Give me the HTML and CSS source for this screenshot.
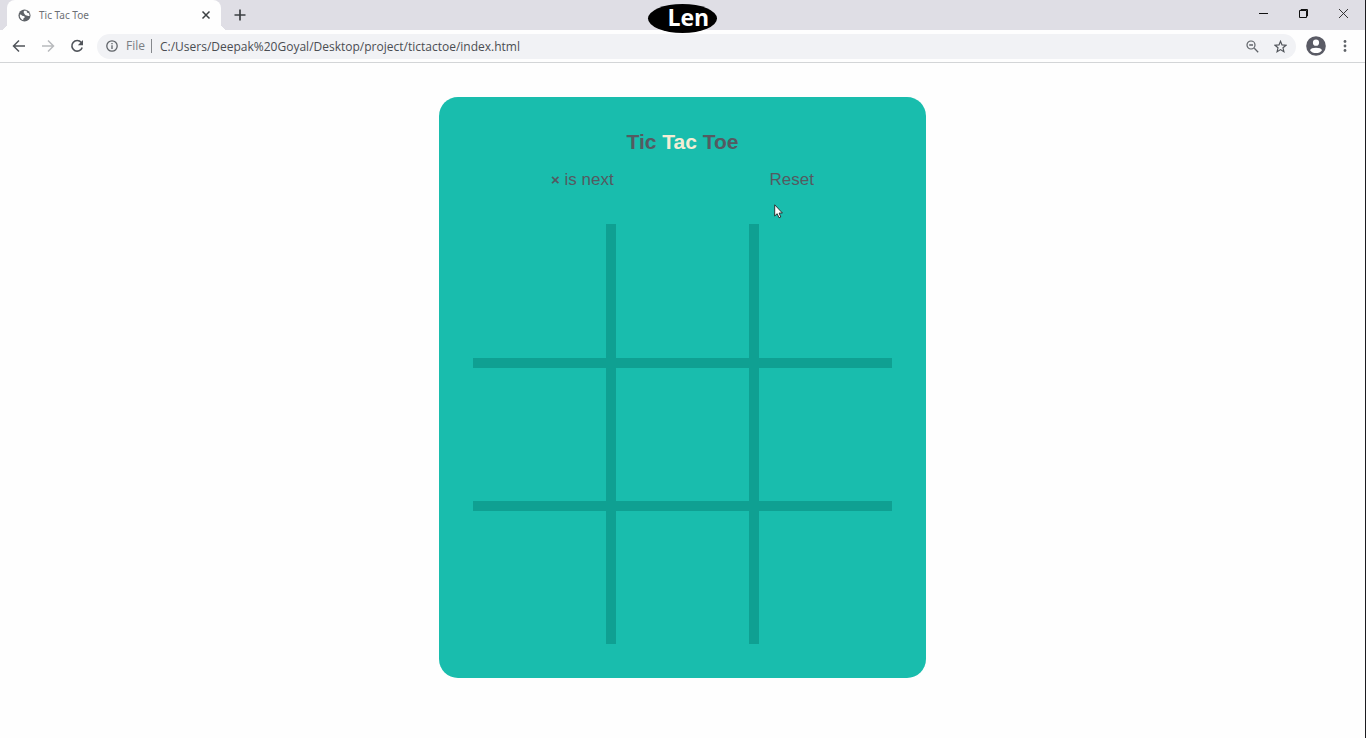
FILE: index.html
```html
<!DOCTYPE html>
<html lang="en">
<head>
<meta charset="utf-8">
<title>Tic Tac Toe</title>
<link rel="stylesheet" href="styles.css">
</head>
<body>
<div class="window">
  <header class="browser">
    <div class="tab-strip">
      <div class="tab">
        <svg class="favicon" viewBox="0 0 14 14"><circle cx="7" cy="7" r="6.500" fill="#5f6368"/><path d="M2 6 C4 5.500 4 8 6 7.500 C8 8 7.500 9.500 6 10 L5.500 12 C3 11 1.500 9 2 6Z M6.500 2 L9.500 2 C9 4 10 4.500 12 4.500 L12.500 7.500 C11 8 10 7 9 7 C8 6.500 7 6 7 5 C6 5 6 3 6.500 2Z" fill="#fff"/></svg>
        <span class="tab-title">Tic Tac Toe</span>
        <button class="icon-button" aria-label="Close tab"><svg width="10" height="10" viewBox="0 0 10 10"><path d="M1.500 1.500 8.500 8.500M8.500 1.500 1.500 8.500" stroke="#3c4043" stroke-width="1.500"/></svg></button>
      </div>
      <button class="icon-button new-tab" aria-label="New tab"><svg width="12" height="12" viewBox="0 0 12 12"><path d="M6 .5V11.500M.5 6H11.500" stroke="#3c4043" stroke-width="1.700"/></svg></button>
      <div class="window-controls">
        <button class="icon-button" aria-label="Minimize"><svg width="11" height="11" viewBox="0 0 11 11"><path d="M1 5.500H10" stroke="#111" /></svg></button>
        <button class="icon-button" aria-label="Restore"><svg width="11" height="11" viewBox="0 0 11 11"><path d="M1.500 2.500H8.500V9.500H1.500ZM3 2.500V1.500H9.500V8H8.500" fill="none" stroke="#111"/></svg></button>
        <button class="icon-button" aria-label="Close"><svg width="11" height="11" viewBox="0 0 11 11"><path d="M1 1 10 10M10 1 1 10" stroke="#222" stroke-width=".9"/></svg></button>
      </div>
    </div>
    <div class="toolbar">
      <nav class="nav-buttons">
        <button class="icon-button" aria-label="Back"><svg width="14" height="14" viewBox="0 0 14 14"><path d="M13 7H2M7 1.500 1.500 7 7 12.500" fill="none" stroke="#50545a" stroke-width="1.500"/></svg></button>
        <button class="icon-button" aria-label="Forward"><svg width="14" height="14" viewBox="0 0 14 14"><path d="M1 7H12M7 1.500 12.500 7 7 12.500" fill="none" stroke="#b8babd" stroke-width="1.500"/></svg></button>
        <button class="icon-button" aria-label="Reload"><svg width="14" height="14" viewBox="0 0 14 14"><path d="M11.300 3.500A5.300 5.300 0 1 0 12.200 8.500" fill="none" stroke="#50545a" stroke-width="1.600"/><path d="M13 1V6.200H7.800Z" fill="#50545a"/></svg></button>
      </nav>
      <div class="address-bar">
        <svg width="12" height="12" viewBox="0 0 12 12"><circle cx="6" cy="6" r="5.200" fill="none" stroke="#5f6368" stroke-width="1.300"/><path d="M6 5.200V9M6 2.900V4.200" stroke="#5f6368" stroke-width="1.300"/></svg>
        <label class="scheme" for="url">File</label>
        <input class="url" id="url" type="text" value="C:/Users/Deepak%20Goyal/Desktop/project/tictactoe/index.html">
        <button class="icon-button" aria-label="Zoom"><svg width="13" height="13" viewBox="0 0 13 13"><path d="M8.300 8.300 12.200 12.200M3.200 5H7" stroke="#5f6368" stroke-width="1.300"/><circle cx="5" cy="5" r="4" fill="none" stroke="#5f6368" stroke-width="1.200"/></svg></button>
        <button class="icon-button" aria-label="Bookmark this page"><svg width="13" height="13" viewBox="0 0 13 13"><path d="M6.500 1.300 8 4.900 12 5.200 9 7.800 9.900 11.700 6.500 9.600 3.100 11.700 4 7.800 1 5.200 5 4.900Z" fill="none" stroke="#50545a" stroke-width="1.200"/></svg></button>
      </div>
      <button class="icon-button profile" aria-label="Profile"><svg width="20" height="20" viewBox="0 0 20 20"><circle cx="10" cy="10" r="9.800" fill="#5a5b65"/><circle cx="10" cy="6.700" r="3.100" fill="#fff"/><path d="M4 14.200C4.500 10.900 15.500 10.900 16 14.200 13.500 18 6.500 18 4 14.200Z" fill="#fff"/></svg></button>
      <button class="icon-button menu" aria-label="Menu"><svg width="4" height="14" viewBox="0 0 4 14"><g fill="#5f6368"><circle cx="2" cy="2.500" r="1.400"/><circle cx="2" cy="7" r="1.400"/><circle cx="2" cy="11.500" r="1.400"/></g></svg></button>
    </div>
    <div class="badge"><span>Len</span></div>
  </header>
  <main class="page">
    <section class="game">
      <h1 class="title">Tic <span class="title-accent">Tac</span> Toe</h1>
      <div class="status">
        <span><span class="mark">×</span> is next</span>
        <button class="reset">Reset</button>
      </div>
      <div class="board">
        <button class="cell" aria-label="Cell 1"></button>
        <button class="cell" aria-label="Cell 2"></button>
        <button class="cell" aria-label="Cell 3"></button>
        <button class="cell" aria-label="Cell 4"></button>
        <button class="cell" aria-label="Cell 5"></button>
        <button class="cell" aria-label="Cell 6"></button>
        <button class="cell" aria-label="Cell 7"></button>
        <button class="cell" aria-label="Cell 8"></button>
        <button class="cell" aria-label="Cell 9"></button>
      </div>
    </section>
  </main>
  <svg class="cursor" width="9" height="15" viewBox="0 0 9 15"><path d="M.7.8V12L3.200 9.700 5 13.800 6.800 13 5.100 9H8.400Z" fill="#fff" stroke="#222" stroke-width=".9"/></svg>
</div>
</body>
</html>
```
FILE: styles.css
```css
* { box-sizing: border-box; }

body { margin: 0; }

button, input {
  margin: 0;
  padding: 0;
  border: 0;
  background: none;
  font: inherit;
  color: inherit;
}

svg { display: block; }

.window {
  position: relative;
  display: flex;
  flex-direction: column;
  min-height: 100vh;
  border-right: 1px solid #1c1c20;
  background: #fefefe;
  font-family: "Open Sans", "Noto Sans", sans-serif;
}

.browser {
  position: relative;
  border-bottom: 1px solid #d3d5d7;
}

.icon-button {
  display: flex;
  flex: none;
  align-items: center;
  justify-content: center;
}

.tab-strip {
  display: flex;
  align-items: center;
  height: 30px;
  padding-left: 7px;
  background: #dfdee5;
}

.tab {
  position: relative;
  display: flex;
  align-items: center;
  gap: 8px;
  width: 214px;
  height: 30px;
  padding: 0 10px 0 11px;
  border-radius: 8px 8px 0 0;
  background: #fefefe;
}

.tab::before,
.tab::after {
  content: "";
  position: absolute;
  bottom: 0;
  width: 7px;
  height: 7px;
}

.tab::before {
  right: 100%;
  background: radial-gradient(circle at 0 0, #dfdee5 7px, #fefefe 7px);
}

.tab::after {
  left: 100%;
  background: radial-gradient(circle at 100% 0, #dfdee5 7px, #fefefe 7px);
}

.favicon {
  width: 13px;
  height: 13px;
}

.tab-title {
  flex: 1;
  font-family: "Noto Sans", sans-serif;
  font-size: 10px;
  color: #6c7075;
}

.new-tab { margin-left: 13px; }

.window-controls {
  display: flex;
  gap: 29px;
  margin-left: auto;
  padding: 0 16px 4px 0;
}

.toolbar {
  display: flex;
  align-items: center;
  height: 32px;
  padding: 0 18px 0 12px;
}

.nav-buttons {
  display: flex;
  gap: 15px;
  margin-right: 13px;
}

.address-bar {
  display: flex;
  flex: 1;
  align-items: center;
  height: 25px;
  padding: 0 9px;
  border-radius: 13px;
  background: #f1f2f5;
  font-size: 12px;
}

.scheme {
  margin-left: 8px;
  padding-right: 6px;
  border-right: 1px solid #85888c;
  line-height: 14px;
  color: #7a7e83;
}

.url {
  flex: 1;
  min-width: 0;
  height: 20px;
  padding-left: 8px;
  color: #4a4d52;
}

.address-bar .icon-button + .icon-button { margin-left: 15px; }

.profile { margin-left: 10px; }

.menu { margin-left: 17px; }

.badge {
  position: absolute;
  top: 4px;
  left: calc(50% - 35px);
  width: 69px;
  height: 29px;
  padding-left: 20px;
  border-radius: 50%;
  background: #000;
  color: #fff;
  font-size: 23px;
  font-weight: 700;
  line-height: 27px;
}

.page {
  display: flex;
  flex: 1;
  align-items: flex-start;
  justify-content: center;
  padding: 34px;
}

.game {
  padding: 33px 34px 34px;
  border-radius: 19px;
  background: #19bdad;
  color: #545a61;
  font-family: "Liberation Sans", Arial, sans-serif;
}

.title {
  margin: 0;
  font-size: 21px;
  line-height: 24px;
  text-align: center;
}

.title-accent { color: #f4edd5; }

.status {
  display: flex;
  justify-content: space-around;
  margin: 17px 0 35px;
  font-size: 17px;
  line-height: 18px;
}

.mark { font-weight: 700; font-size: 15px; }

.board {
  display: grid;
  grid-template-columns: repeat(3, 133px);
  grid-template-rows: 134px 133px 133px;
  gap: 10px;
  background: #0fa092;
}

.cell { background: #19bdad; }

.cursor {
  position: absolute;
  top: 204px;
  left: calc(50% + 91px);
}
```
